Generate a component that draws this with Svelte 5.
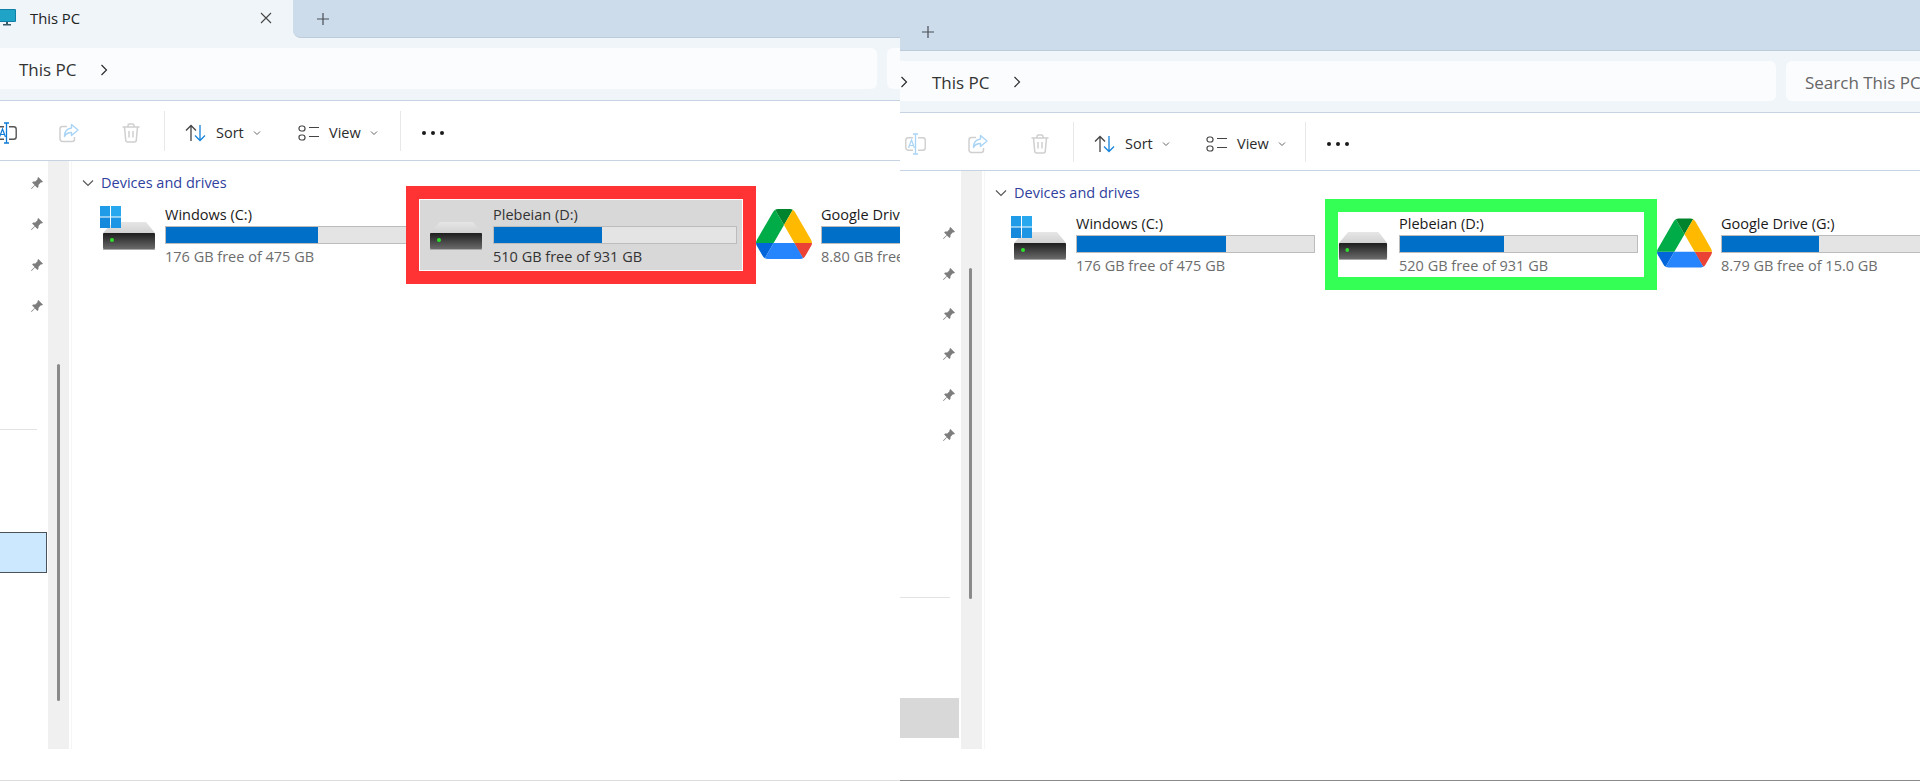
<script>
  const blue = '#006fc8';
  const left = {
    cls: 'left',
    pins: 4,
    drives: [
      { name: 'Windows (C:)', free: '176 GB free of 475 GB', pct: 62.7, kind: 'win', cls: 'c' },
      { name: 'Plebeian (D:)', free: '510 GB free of 931 GB', pct: 44.5, kind: 'hdd', cls: 'd' },
      { name: 'Google Drive (G:)', free: '8.80 GB free of 15.0 GB', pct: 41, kind: 'gd', cls: 'g' }
    ]
  };
  const right = {
    cls: 'right',
    pins: 6,
    drives: [
      { name: 'Windows (C:)', free: '176 GB free of 475 GB', pct: 62.8, kind: 'win', cls: 'c' },
      { name: 'Plebeian (D:)', free: '520 GB free of 931 GB', pct: 43.9, kind: 'hdd', cls: 'd' },
      { name: 'Google Drive (G:)', free: '8.79 GB free of 15.0 GB', pct: 41, kind: 'gd', cls: 'g' }
    ]
  };
</script>

{#snippet plus()}
  <svg class="plus" width="14" height="14" viewBox="0 0 14 14"><path d="M7 1v12M1 7h12" stroke="#4a4f55" stroke-width="1.2" fill="none"/></svg>
{/snippet}

{#snippet chevron()}
  <svg class="crumb" width="8" height="12" viewBox="0 0 8 12"><path d="M1.5 1l5 5-5 5" stroke="#2b2b2b" stroke-width="1.2" fill="none"/></svg>
{/snippet}

{#snippet down(cls)}
  <svg class={cls} width="8" height="6" viewBox="0 0 8 6"><path d="M1 1.5l3 3 3-3" stroke="#666" stroke-width="1" fill="none"/></svg>
{/snippet}

{#snippet hdd()}
  <svg class="hddsvg" width="54" height="28" viewBox="0 0 54 28" preserveAspectRatio="none">
    <defs>
      <linearGradient id="hb" x1="0" y1="0" x2="0" y2="1"><stop offset="0" stop-color="#1e1e1e"/><stop offset="1" stop-color="#6a6a6a"/></linearGradient>
      <linearGradient id="ht" x1="0" y1="0" x2="0" y2="1"><stop offset="0" stop-color="#e6e6e6"/><stop offset="1" stop-color="#d2d2d2"/></linearGradient>
    </defs>
    <path d="M11 0h33l9 11H1z" fill="url(#ht)"/>
    <rect x="1" y="11" width="52" height="16" rx="1" fill="url(#hb)"/>
    <rect x="1" y="27" width="52" height="1" fill="#a8a8a8"/>
    <circle cx="10" cy="18" r="2" fill="#2fe02f"/>
  </svg>
{/snippet}

{#snippet gdrive()}
  <svg class="gdsvg" viewBox="0 0 87.3 78">
    <path d="m6.6 66.85 3.85 6.65c.8 1.4 1.95 2.5 3.3 3.3l13.75-23.8h-27.5c0 1.55.4 3.1 1.2 4.5z" fill="#0066da"/>
    <path d="m43.65 25-13.75-23.8c-1.35.8-2.5 1.9-3.3 3.3l-25.4 44a9.06 9.06 0 0 0 -1.2 4.5h27.5z" fill="#00ac47"/>
    <path d="m73.55 76.8c1.35-.8 2.5-1.9 3.3-3.3l1.6-2.75 7.65-13.25c.8-1.4 1.2-2.95 1.2-4.5h-27.502l5.852 11.5z" fill="#ea4335"/>
    <path d="m43.65 25 13.75-23.8c-1.35-.8-2.9-1.2-4.5-1.2h-18.5c-1.6 0-3.15.45-4.5 1.2z" fill="#00832d"/>
    <path d="m59.8 53h-32.3l-13.75 23.8c1.35.8 2.9 1.2 4.5 1.2h50.8c1.6 0 3.15-.45 4.5-1.2z" fill="#2684fc"/>
    <path d="m73.4 26.5-12.7-22c-.8-1.4-1.95-2.5-3.3-3.3l-13.75 23.8 16.15 28h27.45c0-1.55-.4-3.1-1.2-4.5z" fill="#ffba00"/>
  </svg>
{/snippet}

{#snippet winlogo()}
  <svg class="win" width="21" height="22" viewBox="0 0 21 22">
    <rect x="0" y="0" width="10" height="10.5" fill="#1f9be8"/>
    <rect x="11" y="0" width="10" height="10.5" fill="#28a8ee"/>
    <rect x="0" y="11.5" width="10" height="10.5" fill="#1589dc"/>
    <rect x="11" y="11.5" width="10" height="10.5" fill="#1b95e4"/>
  </svg>
{/snippet}

{#snippet pin()}
  <svg width="14" height="14" viewBox="0 0 14 14"><path d="M8.3 1l4.7 4.7-1.2.9-.8-.3L8.6 8.7l-.2 2.2-1 1L4.9 9.4 1.6 13l-.6-.6 3.6-3.3L2.1 6.6l1-1 2.2-.2L7.7 3l-.3-.8z" fill="#7d7d7d"/></svg>
{/snippet}

{#snippet rename(active)}
  <svg width="21" height="22" viewBox="0 0 21 22">
    <rect x="0.8" y="4.8" width="19.4" height="12.4" rx="2.5" fill="none" stroke={active ? '#555' : '#cfcfcf'} stroke-width="1.4"/>
    <rect x="8" y="3" width="5" height="16" fill="#fff"/>
    <path d="M8 1h5M10.5 1v20M8 21h5" stroke={active ? '#0f7bd6' : '#a9d4f5'} stroke-width="1.3" fill="none"/>
    <path d="M3.5 15l3-8 3 8M4.5 12.5h4" stroke={active ? '#0f7bd6' : '#a9d4f5'} stroke-width="1.2" fill="none"/>
  </svg>
{/snippet}

{#snippet share()}
  <svg width="20" height="20" viewBox="0 0 20 20">
    <path d="M8 3.5H3.5a2.5 2.5 0 0 0-2.5 2.5v10a2.5 2.5 0 0 0 2.5 2.5h9.5a2.5 2.5 0 0 0 2.5-2.5v-2" fill="none" stroke="#cfcfcf" stroke-width="1.5"/>
    <path d="M12.5 1.5L19 7l-6.5 5.5V9.5c-3 0-5.5 1-7 4 0-5 2.500-8 7-8.500z" fill="none" stroke="#a9d4f5" stroke-width="1.4" stroke-linejoin="round"/>
  </svg>
{/snippet}

{#snippet trash()}
  <svg width="18" height="20" viewBox="0 0 18 20">
    <path d="M0.500 4h17M6 4V2.500A1.500 1.500 0 0 1 7.500 1h3A1.500 1.500 0 0 1 12 2.500V4M2.500 4l1.200 13a2 2 0 0 0 2 2h6.600a2 2 0 0 0 2-2l1.200-13M7 8v6.500M11 8v6.500" fill="none" stroke="#cfcfcf" stroke-width="1.500"/>
  </svg>
{/snippet}

{#snippet sorticon()}
  <svg width="21" height="18" viewBox="0 0 21 18">
    <path d="M6 17V1.500M1 6.500l5-5 5 5" fill="none" stroke="#444" stroke-width="1.300"/>
    <path d="M15 1v15.500M10 11.500l5 5 5-5" fill="none" stroke="#1683dc" stroke-width="1.300"/>
  </svg>
{/snippet}

{#snippet viewicon()}
  <svg width="21" height="16" viewBox="0 0 21 16">
    <rect x="1" y="1" width="6" height="5" rx="2.200" fill="none" stroke="#444" stroke-width="1.200"/>
    <rect x="1" y="10" width="6" height="5" rx="2.200" fill="none" stroke="#444" stroke-width="1.200"/>
    <path d="M11 2.500h10M11 11.500h10" stroke="#444" stroke-width="1.200"/>
  </svg>
{/snippet}

{#snippet drive(d)}
  <div class="drive {d.cls}">
    <div class="inner">
      <div class="ic {d.kind}">
        {#if d.kind === 'gd'}
          {@render gdrive()}
        {:else}
          {#if d.kind === 'win'}{@render winlogo()}{/if}
          {@render hdd()}
        {/if}
      </div>
      <div class="txt">
        <div class="name">{d.name}</div>
        <div class="bar"><div class="fill" style="width:{d.pct}%;background:{blue}"></div></div>
        <div class="free">{d.free}</div>
      </div>
    </div>
  </div>
{/snippet}

{#snippet panel(p)}
  <section class="panel {p.cls}">
    <div class="tabs">
      {#if p.cls === 'left'}
        <div class="tab">
          <svg class="pc" width="16" height="17" viewBox="0 0 16 17">
            <rect x="-4" y="0" width="20" height="13" rx="1" fill="#0f7fa8"/>
            <rect x="-3" y="1" width="18" height="11" fill="#1fa3c6"/>
            <path d="M6 13h2v2h3v1.500H3V15h3z" fill="#3a5a6a"/>
          </svg>
          <span class="tabtext">This PC</span>
          <svg class="close" width="12" height="12" viewBox="0 0 12 12"><path d="M1 1l10 10M11 1L1 11" stroke="#444" stroke-width="1.100"/></svg>
        </div>
      {/if}
      <div class="strip">{@render plus()}</div>
    </div>

    <div class="addr">
      <div class="box">
        {#if p.cls === 'right'}<span class="back">{@render chevron()}</span>{/if}
        <span class="crumbtext">This PC</span>
        {@render chevron()}
      </div>
      <div class="search">{#if p.cls === 'right'}<span>Search This PC</span>{/if}</div>
    </div>

    <div class="toolbar">
      <span class="ib first">{@render rename(p.cls === 'left')}</span>
      <span class="ib">{@render share()}</span>
      <span class="ib">{@render trash()}</span>
      <span class="sep s1"></span>
      <span class="tool sort">{@render sorticon()}<span>Sort</span>{@render down('dn')}</span>
      <span class="tool view">{@render viewicon()}<span>View</span>{@render down('dn')}</span>
      <span class="sep s2"></span>
      <span class="dots"><i></i><i></i><i></i></span>
    </div>

    <div class="body">
      <aside class="side">
        <div class="pins">
          {#each Array(p.pins) as _}
            <div class="pinrow">{@render pin()}</div>
          {/each}
        </div>
        <div class="divider"></div>
        <div class="selected"></div>
      </aside>
      <div class="track"><div class="thumb"></div></div>
      <main class="content">
        <div class="head">
          <svg width="12" height="8" viewBox="0 0 12 8"><path d="M1 1.500l5 5 5-5" stroke="#555" stroke-width="1.100" fill="none"/></svg>
          <span>Devices and drives</span>
        </div>
        <div class="row">
          {#each p.drives as d}
            {@render drive(d)}
          {/each}
        </div>
      </main>
    </div>
  </section>
{/snippet}

<div class="app">
  {@render panel(left)}
  {@render panel(right)}
</div>

<style>
  :global(body) { margin: 0; background: #fff; }
  .app {
    display: flex; width: 1920px; height: 781px; overflow: hidden; background: #fff;
    font-family: "Open Sans", "Noto Sans", "Liberation Sans", sans-serif;
    font-size: 14.5px; color: #1c1c1c;
  }
  .panel { display: flex; flex-direction: column; overflow: hidden; height: 781px; box-sizing: border-box; position: relative; }
  .left { width: 900px; border-bottom: 1px solid #dcdcdc; }
  .right { width: 1020px; border-bottom: 1px solid #8a8a8a; }

  /* tabs */
  .tabs { display: flex; align-items: flex-start; background: #f0f5f9; flex: none; }
  .left .tabs { height: 48px; }
  .right .tabs { height: 51px; }
  .tab { width: 293px; height: 48px; display: flex; align-items: flex-start; background: #f0f5f9; border-top-right-radius: 8px; flex: none; }
  .pc { margin-top: 9px; flex: none; }
  .tabtext { margin: 8px 0 0 14px; line-height: 20px; font-weight: 500; font-size: 14.8px; color: #222; width: 230px; }
  .close { margin-top: 12px; flex: none; }
  .strip { flex: 1; background: #cddcea; border-bottom: 1px solid #bccbda; box-sizing: border-box; display: flex; align-items: center; }
  .left .strip { height: 38px; border-bottom-left-radius: 8px; padding-left: 23px; }
  .right .strip { height: 51px; padding: 14px 0 0 21px; }

  /* address */
  .addr { display: flex; gap: 10px; background: #f0f5f9; box-sizing: border-box; flex: none; border-bottom: 1px solid #c5d3e2; }
  .left .addr { height: 53px; padding-bottom: 11px; }
  .right .addr { height: 62px; padding: 10px 0 11px; }
  .box { background: #fbfcfe; border-radius: 0 6px 6px 0; display: flex; align-items: center; box-sizing: border-box; flex: none; padding-top: 2px; }
  .left .box { width: 877px; padding-left: 19px; }
  .right .box { width: 876px; padding-left: 0; }
  .search { background: #fbfcfe; border-radius: 6px 0 0 6px; flex: 1; min-width: 0; display: flex; align-items: center; padding: 2px 0 0 19px; box-sizing: border-box; font-size: 17px; color: #666; white-space: nowrap; overflow: hidden; }
  .crumbtext { font-size: 17px; color: #333; width: 81px; }
  .back { display: inline-flex; margin: 0 24px 0 0; }

  /* toolbar */
  .toolbar { display: flex; align-items: center; background: #fff; flex: none; box-sizing: border-box; border-bottom: 1px solid #c5d3e2; padding-top: 4px; }
  .left .toolbar { height: 60px; }
  .right .toolbar { height: 58px; padding-left: 9px; }
  .ib { width: 21px; margin-right: 41px; display: flex; justify-content: center; align-items: center; }
  .ib.first { margin-left: -4px; }
  .ib + .sep { margin-left: -18px; }
  .sep { width: 1px; height: 40px; background: #e8e8e8; flex: none; margin-top: -3px; }
  .s1 { margin-right: 20px; }
  .tool { display: flex; align-items: center; gap: 10px; flex: none; color: #2b2b2b; font-size: 14.5px; }
  .left .sort { width: 113px; }
  .left .view { width: 102px; }
  .right .sort { width: 112px; }
  .right .view { width: 99px; }
  .tool > :global(.dn) { margin-left: -1px; }
  .dots { display: flex; gap: 5px; margin-left: 21px; }
  .dots i { width: 4px; height: 4px; border-radius: 50%; background: #1a1a1a; display: block; }

  /* body */
  .body { display: flex; flex: none; height: 588px; }
  .right .body { height: 578px; }
  .left .side { width: 48px; }
  .right .side { width: 61px; }
  .side { flex: none; display: flex; flex-direction: column; box-sizing: border-box; }
  .pins { flex: none; }
  .pinrow { display: flex; justify-content: flex-end; align-items: center; box-sizing: border-box; padding-right: 4px; }
  .left .pinrow { height: 41px; }
  .right .pinrow { height: 40.400px; padding-right: 5px; }
  .left .pins { padding-top: 1px; }
  .right .pins { padding-top: 42px; }
  .divider { height: 1px; background: #e3e3e3; flex: none; }
  .left .divider { width: 37px; margin-top: 103px; }
  .right .divider { width: 50px; margin-top: 142px; }
  .selected { flex: none; }
  .left .selected { width: 47px; height: 41px; margin-top: 102px; background: #cce8ff; border: 1px solid #4a5358; border-left: 0; box-sizing: border-box; }
  .right .selected { width: 59px; height: 40px; margin-top: 100px; background: #d8d8d8; }

  .track { width: 21px; background: #f0f0f0; flex: none; position: relative; }
  .thumb { position: absolute; left: 9px; width: 3px; background: #8a8a8a; border-radius: 1.500px; }
  .left .thumb { top: 203px; height: 337px; }
  .right .thumb { left: 8px; top: 97px; height: 331px; }

  .content { flex: 1; min-width: 0; margin-left: 2px; border-left: 1px solid #f6f6f6; overflow: hidden; }
  .head { display: flex; align-items: flex-start; box-sizing: border-box; padding-top: 12px; line-height: 20px; color: #2f3f9e; font-size: 14.5px; white-space: nowrap; }
  .head svg { flex: none; margin: 6px 7px 0 0; }
  .left .head { height: 25px; padding-left: 10px; }
  .right .head { height: 28px; padding-left: 10px; }
  .row { display: flex; align-items: flex-start; white-space: nowrap; }
  .left .row { padding-left: 30px; }
  .right .row { padding-left: 28px; }

  .drive { flex: none; box-sizing: border-box; }
  .inner { display: flex; box-sizing: border-box; }
  .ic { flex: none; position: relative; }
  .ic :global(svg) { display: block; }
  .ic :global(.win) { position: absolute; left: -2px; top: -16px; }
  .ic :global(.gdsvg) { width: 56px; height: 50px; }
  .left .ic { width: 63px; margin-top: 18px; }
  .right .ic { width: 63px; margin-top: 19px; }
  .txt { flex: none; line-height: 20px; }
  .left .txt { width: 244px; }
  .right .txt { width: 239px; }
  .name { color: #1a1a1a; padding-top: 1px; height: 20px; box-sizing: border-box; line-height: 20px; }
  .bar { height: 18px; margin-top: 2px; background: #e4e4e4; box-sizing: border-box; border: 1px solid #bcbcbc; }
  .fill { height: 100%; }
  .free { margin-top: 3px; line-height: 19px; color: #6d6d6d; }

  .left .c .inner, .left .g .inner { padding-top: 18px; }
  .right .c .inner, .right .g .inner { padding-top: 14px; }

  .d { border: 13px solid #ff3333; }
  .left .d { width: 350px; margin-left: -3px; }
  .left .d .inner { height: 72px; background: #d8d8d8; border: 1px solid #fff; padding: 4px 0 0 9px; }
  .left .d .ic { width: 64px; margin-top: 18px; }
  .left .d .free, .left .d .name { color: #333; }
  .right .d { width: 332px; margin-left: 10px; border-color: #33ff55; }
  .right .d .inner { height: 65px; background: #fff; padding-top: 1px; }
  .right .d .ic { width: 61px; margin-top: 19px; }
  .right .d :global(.hddsvg) { width: 50px; }
  .left .g .ic { width: 65px; margin-top: 5px; }
  .right .g .ic { width: 64px; margin-top: 5px; }
  .right .g :global(.gdsvg) { width: 55px; height: 50px; }
</style>
